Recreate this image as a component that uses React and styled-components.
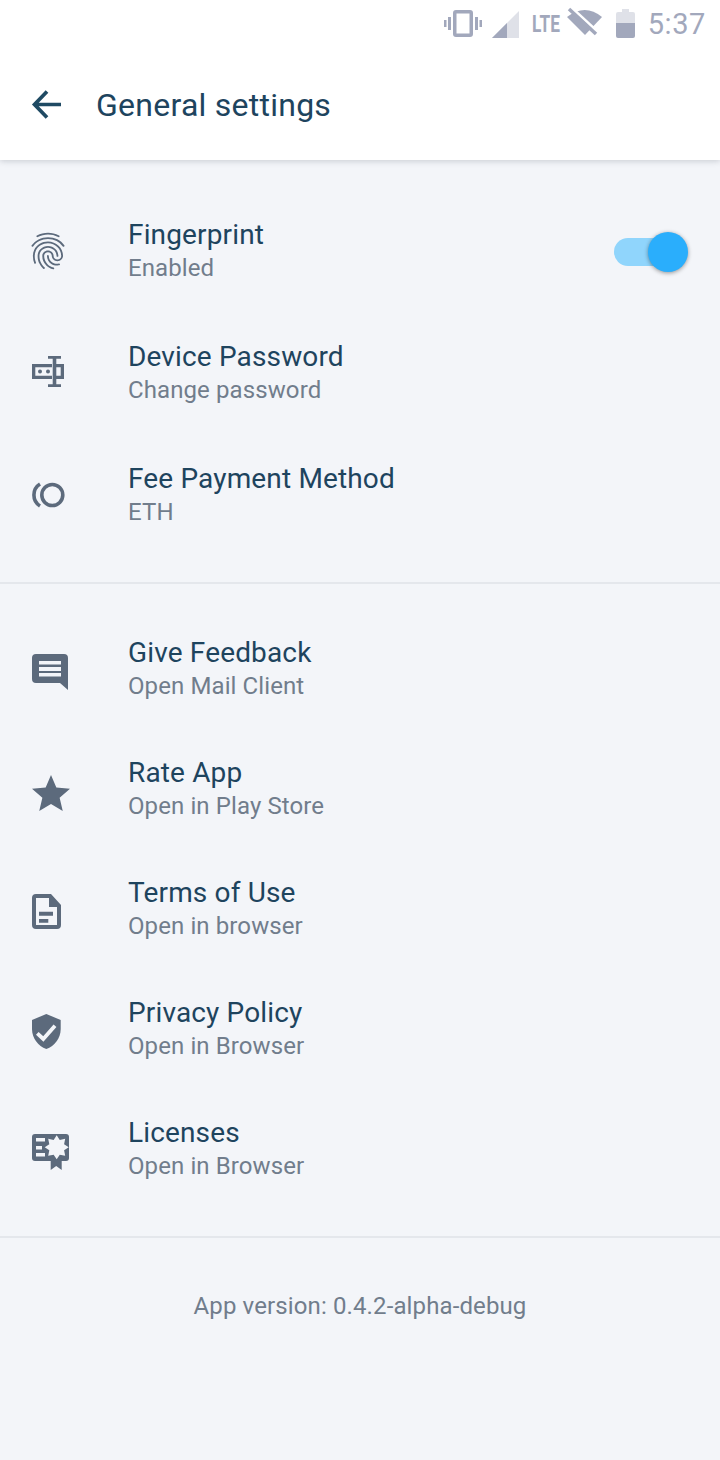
import styled, { createGlobalStyle } from "styled-components";
import { MdFingerprint } from "react-icons/md";

const BG = "#f3f5f9";

const GlobalStyle = createGlobalStyle`
html, body {
  margin: 0;
  padding: 0;
  background: ${BG};
  font-family: Roboto, "Liberation Sans", sans-serif;
}
`;

const Page = styled.div`
width: 720px;
height: 1460px;
overflow: hidden;
background: ${BG};
`;

const Header = styled.header`
background: #fff;
height: 160px;
box-shadow: 0 1px 6px rgba(40, 50, 70, 0.22);
`;

const StatusBar = styled.div`
height: 48px;
display: flex;
justify-content: flex-end;
align-items: center;
padding-right: 14px;
color: #a2a8bc;
`;

const StatusIcon = styled.svg`
display: block;
margin-right: ${(props) => props.$gap}px;
`;

const Lte = styled.span`
width: 26px;
margin-right: 9px;
font-size: 24px;
font-weight: 700;
line-height: 48px;
white-space: nowrap;
transform: scaleX(0.72);
transform-origin: left center;
`;

const Clock = styled.span`
font-size: 29px;
letter-spacing: 0.6px;
line-height: 48px;
`;

const Toolbar = styled.div`
height: 112px;
display: flex;
align-items: center;
padding: 0 24px 0 24px;
box-sizing: border-box;
color: #1f4a63;
`;

const BackIcon = styled.svg`
display: block;
margin-right: 24px;
`;

const Title = styled.h1`
margin: 2px 0 0;
font-size: 32px;
font-weight: 400;
letter-spacing: 0.25px;
color: #1e445e;
`;

const Section = styled.section`
padding-top: ${(props) => props.$top}px;
padding-bottom: ${(props) => props.$bottom}px;
border-bottom: 2px solid #e4e7ec;
`;

const Row = styled.div`
height: ${(props) => props.$height}px;
display: flex;
align-items: center;
padding: 0 36px 0 24px;
color: #5c6a7c;
`;

const IconCell = styled.div`
flex: none;
width: 48px;
height: 48px;
margin-right: 56px;
display: flex;
align-items: center;
justify-content: center;
`;

const Labels = styled.div`
flex: 1;
display: flex;
flex-direction: column;
`;

const RowTitle = styled.span`
font-size: 28px;
line-height: 34px;
letter-spacing: 0.15px;
color: #1e445e;
`;

const RowSub = styled.span`
font-size: 24px;
line-height: 32px;
letter-spacing: 0.1px;
color: #717d8c;
`;

const Switch = styled.div`
position: relative;
width: 70px;
height: 28px;
margin-top: 2px;
border-radius: 14px;
background: #90d5fc;
`;

const Thumb = styled.div`
position: absolute;
top: -6px;
right: -4px;
width: 40px;
height: 40px;
border-radius: 50%;
background: #2aaefc;
box-shadow: 0 1px 4px rgba(0, 0, 0, 0.4);
`;

const Version = styled.div`
padding-top: 52px;
text-align: center;
font-size: 24px;
line-height: 32px;
letter-spacing: 0.12px;
color: #717d8c;
`;

const DeviceIcon = () => (
  <svg width="48" height="48" viewBox="0 0 48 48" fill="currentColor">
    <path d="M8 15h20v3.300H11.300v8.400H28V30H8z" />
    <circle cx="16" cy="22.5" r="2" />
    <circle cx="24" cy="22.5" r="2" />
    <path d="M24 7h13v2.700h-4.700V35.300H37V38H24v-2.700h4.700V9.700H24z" />
    <path d="M32 15h8v15h-8v-3.300h4.700v-8.400H32z" />
  </svg>
);

const FeeIcon = () => (
  <svg width="48" height="48" viewBox="0 0 48 48" fill="none" stroke="currentColor" strokeWidth="3.6">
    <circle cx="28.300" cy="24" r="10.500" />
    <path d="M16 13A13 13 0 0 0 16 35" />
  </svg>
);

const ChatIcon = () => (
  <svg width="48" height="48" viewBox="0 0 48 48" fill="currentColor">
    <path
      fillRule="evenodd"
      d="M12 9h28a4 4 0 0 1 4 4v32l-8-7H12a4 4 0 0 1-4-4V13a4 4 0 0 1 4-4zM15 16v3.500h22V16zM15 22v4h22v-4zM15 28v3.500h22V28z"
    />
  </svg>
);

const StarIcon = () => (
  <svg width="48" height="48" viewBox="0 0 48 48" fill="currentColor">
    <path
      transform="translate(4.200 6.200) scale(1.9)"
      d="M12 17.270 18.180 21l-1.640-7.030L22 9.240l-7.190-.610L12 2 9.190 8.630 2 9.240l5.460 4.730L5.820 21z"
    />
  </svg>
);

const DocIcon = () => (
  <svg width="48" height="48" viewBox="0 0 48 48" fill="currentColor">
    <path
      fillRule="evenodd"
      d="M12 9h15l10 11v20a4 4 0 0 1-4 4H12a4 4 0 0 1-4-4V13a4 4 0 0 1 4-4zM12 13v27h21V22h-8v-9zM15 26.700h14v4H15zM15 34h9.300v3.700H15z"
    />
  </svg>
);

const ShieldIcon = () => (
  <svg width="48" height="48" viewBox="0 0 48 48" fill="currentColor">
    <path d="M22.300 9 36.700 15v9c0 9-6 17-14.400 20C14 41 8 33 8 24v-9z" />
    <path d="M13.300 28.300 19.300 34 31 20.700" fill="none" stroke={BG} strokeWidth="3.8" />
  </svg>
);

// 8 point seal on the licence card
const sealPoints = Array.from({ length: 16 }, (_, i) => {
  const r = i % 2 ? 8 : 12;
  const a = (i * Math.PI) / 8 - Math.PI / 2;
  return `${(32.7 + r * Math.cos(a)).toFixed(2)},${(22.3 + r * Math.sin(a)).toFixed(2)}`;
}).join(" ");

const LicenseIcon = () => (
  <svg width="48" height="48" viewBox="0 0 48 48" fill="currentColor">
    <rect x="8" y="9" width="37" height="27" rx="3" />
    <path d="M26.700 30h11v15l-5.500-4-5.500 4z" />
    <polygon points={sealPoints} fill={BG} />
    <path d="M12 13h9v3.500h-9zM12 21h6v3.500h-6zM12 28h9v3.500h-9z" fill={BG} />
  </svg>
);

const settings = [
  { icon: <MdFingerprint size={44} />, title: "Fingerprint", sub: "Enabled", toggle: true },
  { icon: <DeviceIcon />, title: "Device Password", sub: "Change password" },
  { icon: <FeeIcon />, title: "Fee Payment Method", sub: "ETH" },
];

const links = [
  { icon: <ChatIcon />, title: "Give Feedback", sub: "Open Mail Client" },
  { icon: <StarIcon />, title: "Rate App", sub: "Open in Play Store" },
  { icon: <DocIcon />, title: "Terms of Use", sub: "Open in browser" },
  { icon: <ShieldIcon />, title: "Privacy Policy", sub: "Open in Browser" },
  { icon: <LicenseIcon />, title: "Licenses", sub: "Open in Browser" },
];

const SettingRow = ({ item, height }) => (
  <Row $height={height}>
    <IconCell>{item.icon}</IconCell>
    <Labels>
      <RowTitle>{item.title}</RowTitle>
      <RowSub>{item.sub}</RowSub>
    </Labels>
    {item.toggle && (
      <Switch>
        <Thumb />
      </Switch>
    )}
  </Row>
);

const App = () => (
  <Page>
    <GlobalStyle />
    <Header>
      <StatusBar>
        <StatusIcon $gap={10} width="38" height="48" viewBox="0 0 38 48" fill="currentColor">
          <path
            fillRule="evenodd"
            d="M12 10h14a3 3 0 0 1 3 3v21a3 3 0 0 1-3 3H12a3 3 0 0 1-3-3V13a3 3 0 0 1 3-3zM12.500 13.500v20h13v-20z"
          />
          <path d="M4 17h3v13H4zM0 20h2.500v7H0zM31 17h3v13h-3zM35.500 20H38v7h-2.500z" />
        </StatusIcon>
        <StatusIcon $gap={13} width="27" height="48" viewBox="0 0 27 48" fill="currentColor">
          <path d="M27 11v27H0z" opacity="0.35" />
          <path d="M15 23v15H0z" />
        </StatusIcon>
        <Lte>LTE</Lte>
        <StatusIcon $gap={14} width="35" height="48" viewBox="0 0 35 48" fill="currentColor">
          <path d="M0 17Q18 3 35 17L18 35z" />
          <path d="M6 9 33 34" stroke="#fff" strokeWidth="3" />
          <path d="M2 9 29 34" stroke="currentColor" strokeWidth="3.500" />
        </StatusIcon>
        <StatusIcon $gap={13} width="19" height="48" viewBox="0 0 19 48" fill="currentColor">
          <path d="M6 9h7v3h4a2 2 0 0 1 2 2v9H0v-9a2 2 0 0 1 2-2h4z" opacity="0.35" />
          <path d="M0 23h19v13a2 2 0 0 1-2 2H2a2 2 0 0 1-2-2z" />
        </StatusIcon>
        <Clock>5:37</Clock>
      </StatusBar>
      <Toolbar>
        <BackIcon width="48" height="48" viewBox="0 0 48 48" fill="none" stroke="currentColor" strokeWidth="3.7">
          <path d="M37 24.500H11M23 11.500 10.500 24.500 23 37.500" />
        </BackIcon>
        <Title>General settings</Title>
      </Toolbar>
    </Header>
    <Section $top={30} $bottom={26}>
      {settings.map((item) => (
        <SettingRow key={item.title} item={item} height={122} />
      ))}
    </Section>
    <Section $top={25} $bottom={27}>
      {links.map((item) => (
        <SettingRow key={item.title} item={item} height={120} />
      ))}
    </Section>
    <Version>App version: 0.4.2-alpha-debug</Version>
  </Page>
);

export default App;
